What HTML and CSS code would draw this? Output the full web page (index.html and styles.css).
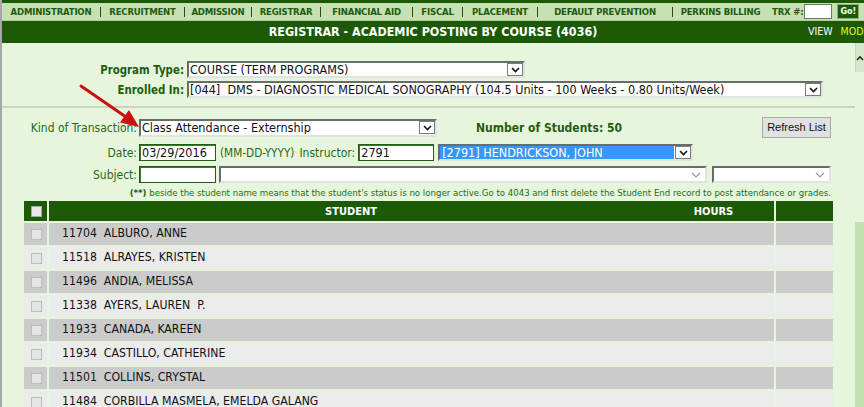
FILE: index.html
```html
<!DOCTYPE html>
<html>
<head>
<meta charset="utf-8">
<link rel="stylesheet" href="styles.css">
</head>
<body>
<div class="page">
  <div class="topstrip"></div>
  <nav class="nav">
    <span class="nav-item">ADMINISTRATION</span>
    <span class="nav-item">RECRUITMENT</span>
    <span class="nav-item">ADMISSION</span>
    <span class="nav-item">REGISTRAR</span>
    <span class="nav-item">FINANCIAL AID</span>
    <span class="nav-item">FISCAL</span>
    <span class="nav-item">PLACEMENT</span>
    <span class="nav-item">DEFAULT PREVENTION</span>
    <span class="nav-item">PERKINS BILLING</span>
    <span class="trx"><span class="trx-label">TRX #:</span><span class="trx-input"></span><span class="go-btn">Go!</span></span>
  </nav>
  <div class="titlebar">
    <span></span>
    <span class="title">REGISTRAR - ACADEMIC POSTING BY COURSE (4036)</span>
    <span class="modes"><span class="mode-view">VIEW</span><span class="mode-mod">MOD</span></span>
  </div>
  <div class="body-row">
    <div class="main">
      <div class="upper">
        <div class="frow">
          <span class="flabel">Program Type:</span>
          <div class="sel sel-program"><span class="sel-text">COURSE (TERM PROGRAMS)</span><span class="sel-btn"><svg width="9" height="6" viewBox="0 0 9 6"><path d="M1 1l3.5 3.5L8 1" fill="none" stroke="#111" stroke-width="1.6"/></svg></span></div>
        </div>
        <div class="frow">
          <span class="flabel">Enrolled In:</span>
          <div class="sel sel-enrolled"><span class="sel-text">[044]&nbsp; DMS - DIAGNOSTIC MEDICAL SONOGRAPHY (104.5 Units - 100 Weeks - 0.80 Units/Week)</span><span class="sel-btn"><svg width="9" height="6" viewBox="0 0 9 6"><path d="M1 1l3.5 3.5L8 1" fill="none" stroke="#111" stroke-width="1.6"/></svg></span></div>
        </div>
      </div>
      <div class="sep"></div>
      <div class="lower">
        <div class="lrow lrow-kind">
          <span class="llabel">Kind of Transaction:</span>
          <div class="sel sel-kind"><span class="sel-text">Class Attendance - Externship</span><span class="sel-btn"><svg width="9" height="6" viewBox="0 0 9 6"><path d="M1 1l3.5 3.5L8 1" fill="none" stroke="#111" stroke-width="1.6"/></svg></span></div>
          <span class="count">Number of Students: 50</span>
          <span class="refresh-btn">Refresh List</span>
        </div>
        <div class="lrow lrow-date">
          <span class="llabel">Date:</span>
          <span class="inp inp-date">03/29/2016</span>
          <span class="hint">(MM-DD-YYYY)</span>
          <span class="ilabel">Instructor:</span>
          <span class="inp inp-instr">2791</span>
          <div class="sel sel-instr"><span class="sel-text sel-hl">[2791] HENDRICKSON, JOHN</span><span class="sel-btn"><svg width="9" height="6" viewBox="0 0 9 6"><path d="M1 1l3.5 3.5L8 1" fill="none" stroke="#111" stroke-width="1.6"/></svg></span></div>
        </div>
        <div class="lrow lrow-subject">
          <span class="llabel">Subject:</span>
          <span class="inp inp-subject"></span>
          <div class="sel sel-subj1"><span class="sel-text"></span><span class="sel-chev"><svg width="10" height="6" viewBox="0 0 10 6"><path d="M1 1l4 4 4-4" fill="none" stroke="#9a9a9a" stroke-width="1.2"/></svg></span></div>
          <div class="sel sel-subj2"><span class="sel-text"></span><span class="sel-chev"><svg width="10" height="6" viewBox="0 0 10 6"><path d="M1 1l4 4 4-4" fill="none" stroke="#9a9a9a" stroke-width="1.2"/></svg></span></div>
        </div>
        <div class="note"><b>(**)</b> beside the student name means that the student's status is no longer active.Go to 4043 and first delete the Student End record to post attendance or grades.</div>
      </div>
      <div class="grid-table">
        <div class="tr thead">
          <div class="td td-check"><span class="cb cb-head"></span></div>
          <div class="td th-mid"><span>STUDENT</span><span>HOURS</span></div>
          <div class="td"></div>
        </div>
        <div class="tr odd"><div class="td td-check"><span class="cb"></span></div><div class="td td-name">11704&nbsp; ALBURO, ANNE</div><div class="td"></div></div>
        <div class="tr even"><div class="td td-check"><span class="cb"></span></div><div class="td td-name">11518&nbsp; ALRAYES, KRISTEN</div><div class="td"></div></div>
        <div class="tr odd"><div class="td td-check"><span class="cb"></span></div><div class="td td-name">11496&nbsp; ANDIA, MELISSA</div><div class="td"></div></div>
        <div class="tr even"><div class="td td-check"><span class="cb"></span></div><div class="td td-name">11338&nbsp; AYERS, LAUREN&nbsp; P.</div><div class="td"></div></div>
        <div class="tr odd"><div class="td td-check"><span class="cb"></span></div><div class="td td-name">11933&nbsp; CANADA, KAREEN</div><div class="td"></div></div>
        <div class="tr even"><div class="td td-check"><span class="cb"></span></div><div class="td td-name">11934&nbsp; CASTILLO, CATHERINE</div><div class="td"></div></div>
        <div class="tr odd"><div class="td td-check"><span class="cb"></span></div><div class="td td-name">11501&nbsp; COLLINS, CRYSTAL</div><div class="td"></div></div>
        <div class="tr even"><div class="td td-check"><span class="cb"></span></div><div class="td td-name">11484&nbsp; CORBILLA MASMELA, EMELDA GALANG</div><div class="td"></div></div>
      </div>
    </div>
    <div class="scroll">
      <div class="scroll-up"><svg width="8" height="6" viewBox="0 0 8 6"><path d="M1 5l3-3.2L7 5" fill="none" stroke="#1a2a10" stroke-width="1.6"/></svg></div>
      <div class="scroll-track"></div>
      <div class="scroll-thumb"></div>
    </div>
  </div>
  <svg class="annot" width="160" height="140" viewBox="0 0 160 140">
    <line x1="81" y1="86" x2="126" y2="117" stroke="#cc1010" stroke-width="3" stroke-linecap="round"/>
    <polygon points="139,127 120,122.5 129,110" fill="#cc1010"/>
  </svg>
</div>
</body>
</html>
```

FILE: styles.css
```css
* { box-sizing: border-box; }
html, body { margin: 0; padding: 0; }
body {
  width: 864px;
  height: 407px;
  overflow: hidden;
  background: #e6f6dc;
  font-family: "DejaVu Sans Condensed", "DejaVu Sans", sans-serif;
  color: #111;
}
.page {
  position: relative;
  height: 407px;
  border-left: 2px solid #a8a8a8;
  display: flex;
  flex-direction: column;
  overflow: hidden;
}
.topstrip { height: 3px; background: #1c5a08; flex: 0 0 auto; }
.nav {
  height: 18px;
  flex: 0 0 auto;
  background: #c7e1b2;
  display: grid;
  grid-template-columns: 98px 84px 67px 69px 92px 50px 75px 135px 96px auto;
  align-items: center;
  border-bottom: 1px solid #b2cc9e;
}
.nav-item {
  text-align: center;
  font-weight: bold;
  font-size: 9.5px;
  line-height: 10px;
  letter-spacing: -0.2px;
  color: #1f5a10;
  white-space: nowrap;
}
.nav-item + .nav-item { border-left: 1px solid #2a4a20; }
.trx { display: flex; align-items: center; margin-left: 4px; }
.trx-label { font-weight: bold; font-size: 9.5px; letter-spacing: -0.2px; color: #1f5a10; white-space: nowrap; }
.trx-input { width: 28px; height: 15px; background: #fff; border: 1px solid #6d7a66; margin-left: 1px; }
.go-btn {
  width: 22px; height: 15px; margin-left: 5px;
  background: #1c5a08; border: 1px solid #94ab88;
  color: #fff; font-weight: bold; font-size: 9px; line-height: 13px; text-align: center;
}
.titlebar {
  height: 22px;
  flex: 0 0 auto;
  background: #1c5a08;
  display: grid;
  grid-template-columns: 1fr auto 1fr;
  align-items: center;
}
.title { color: #fff; font-weight: bold; font-size: 12.4px; white-space: nowrap; padding-bottom: 2px; }
.modes {
  justify-self: end;
  width: 56px;
  white-space: nowrap;
  font-size: 10.5px;
  padding-bottom: 2px;
}
.mode-view { color: #fff; margin-right: 8px; }
.mode-mod { color: #f2f200; }
.body-row { display: flex; flex: 1; min-height: 0; }
.main { flex: 0 0 853px; }
.scroll { flex: 0 0 9px; display: flex; flex-direction: column; }
.scroll-up {
  height: 29px; background: #d6e8cb; border-left: 1px solid #c6d6bc;
  display: flex; align-items: center; justify-content: center;
}
.scroll-track { height: 150px; }
.scroll-thumb { flex: 1; background: #c7e0b1; }
.upper { padding-top: 18px; }
.frow { display: flex; align-items: center; height: 17px; margin-bottom: 3px; }
.flabel {
  width: 182px; margin-right: 3px; text-align: right;
  font-weight: bold; font-size: 11.4px; color: #1f5c10; white-space: nowrap;
}
.sel {
  display: flex; align-items: center;
  height: 17px;
  background: #fff;
  border: 2px solid;
  border-color: #6b6b6b #e2e2e2 #e2e2e2 #6b6b6b;
  font-size: 12.5px;
  white-space: nowrap;
  overflow: hidden;
}
.sel-text { flex: 1; padding-left: 1px; line-height: 13px; overflow: hidden; }
.sel-btn {
  width: 16px; height: 13px; flex: 0 0 16px;
  border: 1px solid #7c7c7c; background: #fff;
  display: flex; align-items: center; justify-content: center;
}
.sel-chev { width: 18px; flex: 0 0 18px; display: flex; align-items: center; justify-content: center; }
.sel-program { width: 338px; }
.sel-enrolled { width: 636px; }
.sep { margin-top: 8px; height: 2px; background: #c9d4c3; }
.lower { padding: 9px 24px 0 0; }
.lrow { display: flex; align-items: center; }
.lrow-kind { height: 21px; }
.lrow-date { height: 17px; margin-top: 6px; }
.lrow-subject { height: 17px; margin-top: 5px; }
.llabel {
  width: 135px; margin-right: 2px; text-align: right;
  font-size: 12px; color: #2a6818; white-space: nowrap;
}
.sel-kind { width: 298px; height: 18px; }
.count { margin-left: 39px; font-weight: bold; font-size: 12px; color: #1f5c10; white-space: nowrap; }
.refresh-btn {
  margin-left: auto;
  width: 69px; height: 21px;
  background: #e1e1e1; border: 1px solid #a9a9a9;
  font-family: "Liberation Sans", Arial, sans-serif; font-size: 11px;
  line-height: 19px; text-align: center; color: #111;
}
.inp {
  height: 17px; background: #fff; border: 1px solid #215e12;
  box-shadow: inset 1px 1px 0 #3d7530;
  font-size: 12.5px; line-height: 15px; padding-left: 2px; white-space: nowrap;
}
.inp-date { width: 77px; }
.hint { margin-left: 4px; font-size: 11.7px; color: #2a6818; white-space: nowrap; }
.ilabel { margin-left: 5px; font-size: 12px; color: #2a6818; white-space: nowrap; }
.inp-instr { width: 76px; margin-left: 3px; }
.sel-instr { width: 255px; margin-left: 4px; }
.sel-hl { background: #3399ff; color: #fff; margin-right: 1px; padding-left: 2px; }
.inp-subject { width: 77px; }
.sel-subj1 { width: 488px; margin-left: 3px; }
.sel-subj2 { width: 119px; margin-left: 5px; }
.note {
  margin-top: 4px;
  height: 12px;
  text-align: right;
  font-size: 9.55px;
  line-height: 12px;
  color: #2a6818;
  white-space: nowrap;
}
.note b { color: #1f5c10; }
.grid-table {
  margin-top: 2px;
  margin-left: 22px;
  width: 809px;
  display: flex;
  flex-direction: column;
  gap: 2px;
}
.tr {
  display: grid;
  grid-template-columns: 23px 1fr 57px;
  column-gap: 2px;
  height: 22px;
  flex: 0 0 auto;
}
.thead { height: 20px; }
.thead .td { background: #1c5a08; }
.odd .td { background: #cbcbcb; }
.even .td { background: #ebebeb; }
.td-check { display: flex; align-items: center; padding-left: 7px; }
.cb { width: 11px; height: 11px; background: #e5e5e5; border: 1px solid #bcbcbc; }
.cb-head { background: #e9e9e9; border-color: #a8a8a8; }
.th-mid {
  display: grid;
  grid-template-columns: 604px 1fr;
  align-items: center;
  color: #fff;
  font-weight: bold;
  font-size: 11px;
  text-align: center;
}
.td-name {
  padding-left: 13px;
  font-size: 12.2px;
  line-height: 20px;
  white-space: nowrap;
  color: #111;
}
.annot { position: absolute; left: -2px; top: 0; pointer-events: none; }
```
